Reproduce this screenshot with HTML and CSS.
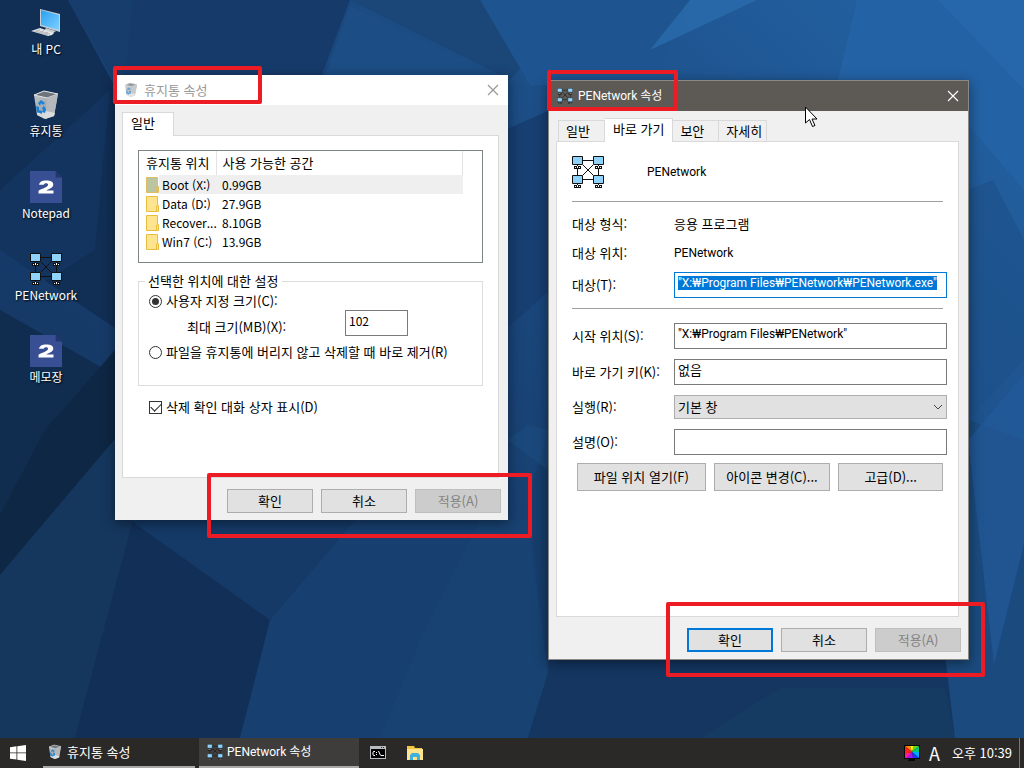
FILE: index.html
```html
<!DOCTYPE html>
<html lang="ko">
<head>
<meta charset="utf-8">
<title>바탕 화면</title>
<link rel="stylesheet" href="styles.css">
</head>
<body>
<svg class="defs" width="0" height="0" aria-hidden="true">
  <defs>
    <linearGradient id="sky" x1="0" y1="0.75" x2="1" y2="0"><stop offset="0" stop-color="#14335c"/><stop offset="0.5" stop-color="#1a467b"/><stop offset="1" stop-color="#2465a8"/></linearGradient>
    <linearGradient id="screen" x1="0" y1="0" x2="1" y2="1"><stop offset="0" stop-color="#2aa0f0"/><stop offset="1" stop-color="#7dd0ff"/></linearGradient>
    <linearGradient id="bin" x1="0" y1="0" x2="1" y2="1"><stop offset="0" stop-color="#c3c7ca"/><stop offset="0.6" stop-color="#9da2a7"/><stop offset="1" stop-color="#d8dadc"/></linearGradient>
    <symbol id="i-net" viewBox="0 0 32 32">
      <g fill="none" stroke="#111" stroke-width="1"><path d="M11 4.500h10M11 23.500h10M5.500 12v7M26.500 12v7M11 9l10 10M21 9L11 19"/></g>
      <g fill="#8fd3fb" stroke="#111"><path d="M.5.500h10v8H.5zM21.500.500h10v8h-10zM.5 19.500h10v8H.5zM21.500 19.500h10v8h-10z"/></g>
      <g fill="#111"><path d="M5 9h1v4H5zM2 10h7v3H2zM26 9h1v4h-1zM23 10h7v3h-7zM5 28h1v4H5zM2 29h7v3H2zM26 28h1v4h-1zM23 29h7v3h-7z"/></g>
      <g fill="#fff"><path d="M3 11h1v1H3zM5 10h1v2H5zM7 11h1v1H7zM24 11h1v1h-1zM26 10h1v2h-1zM28 11h1v1h-1zM3 30h1v1H3zM5 29h1v2H5zM7 30h1v1H7zM24 30h1v1h-1zM26 29h1v2h-1zM28 30h1v1h-1z"/></g>
    </symbol>
    <symbol id="i-bin" viewBox="0 0 32 32">
      <path d="M4 6l10-4 14 3-4 22-9 3-8-4z" fill="url(#bin)"/>
      <path d="M4 6l10-4 14 3-11 4z" fill="#6d747b" stroke="#e2e4e5" stroke-width="1"/>
      <path d="M17 9l11-4-4 22-9 3z" fill="#b4b8bd"/>
      <path d="M7 24l9-2 9 2-1 3-9 3-8-4z" fill="#e4e5e6" opacity=".8"/>
      <path d="M8 14l3-3 4 3-2 2-2-2-1 3zM6 17l3 1v3l3 1v3l-5-2zM14 17l2 3-1 4-3-1 1-2-1-2z" fill="#1683d8"/>
    </symbol>
    <symbol id="i-pc" viewBox="0 0 32 32">
      <path d="M10 2l20 5v18l-20-6z" fill="#c8d0d6"/><path d="M11 3l18 5v15l-18-5z" fill="url(#screen)"/>
      <path d="M16 21l10 3-4 3-8-3z" fill="#c9cccf"/><path d="M10 21l14 5-2 2-4 1-17-5z" fill="#e3e5e6"/>
      <path d="M6 23l14 4M4 24l14 4M10 22l-4 4M14 23l-4 4M18 25l-4 3" stroke="#a3a8ad" stroke-width=".7"/>
    </symbol>
    <symbol id="i-two" viewBox="0 0 30 30">
      <path d="M0 0h24l6 6v24H0z" fill="#384f93"/><path d="M24 0l6 6h-6z" fill="#24366e"/>
      <path d="M8.500 13c.3-2.700 2.800-4 6.700-4 4.200 0 6.600 1.300 6.600 3.700 0 2.500-2.200 3.500-6.500 5.500H22V21H8v-2.500c3.800-2 9-3.500 9-5.500 0-1-.8-1.500-1.900-1.500-1.300 0-2 .6-2.200 1.500z" fill="#fff"/>
    </symbol>
    <symbol id="i-folder" viewBox="0 0 13 16"><path d="M.5.500h11v9h1v6H.5z" fill="currentColor" stroke="#e8be3e"/><path d="M10.500 15v-5h1" fill="none" stroke="#e8be3e"/></symbol>
    <symbol id="i-close" viewBox="0 0 12 12"><path d="M1 1l10 10M11 1L1 11" fill="none" stroke="currentColor" stroke-width="1.200"/></symbol>
  </defs>
</svg>

<main class="desktop">
  <svg class="wallpaper" viewBox="0 0 1024 738" preserveAspectRatio="none" aria-hidden="true">
    <path fill="url(#sky)" d="M0 0h1024v738H0z"/>
    <path fill="#112e55" d="M0 0h68l57 105v230L0 250z"/>
    <path fill="#163d6c" d="M68 0h65l-8 100z"/>
    <path fill="#14396a" d="M110 90L95 250 0 310V190z" opacity=".5"/>
    <path fill="#163b6b" d="M133 0h217l-30 80H125z"/>
    <path fill="#1c4d84" d="M350 6l180 84H320z"/>
    <path fill="#1a4678" d="M350 0h230l-70 80z"/>
    <path fill="#1e5490" d="M480 0h210l-40 85H530z"/>
    <path fill="#2a6bad" d="M690 0h67L650 50z" opacity=".8"/>
    <path fill="#2362a5" d="M857 0h167v190l-60-70-126-40z"/>
    <path fill="#286bb0" d="M938 0h86v90z" opacity=".5"/>
    <path fill="#173f71" d="M505 130l45-20v180l-45 40z"/>
    <path fill="#102c4e" d="M0 310l115 65v64L0 575z"/>
    <path fill="#0e2744" d="M45 430l70-80v89L0 575v-60z"/>
    <path fill="#15375e" d="M115 439v81h18L75 738H0V575z"/>
    <path fill="#122f57" d="M133 520l-58 218h165l30-118z"/>
    <path fill="#153a67" d="M130 520h225l-85 100z"/>
    <path fill="#173f6f" d="M355 520h173l20 153-20 65H240l30-118z"/>
    <path fill="#194674" d="M420 640l60-120h48l20 153-20 65H380z" opacity=".5"/>
    <path fill="#163d6b" d="M528 500l20-70v240z"/>
    <path fill="#1c4c80" d="M508 440l40 30v-40l-20-5z" opacity=".6"/>
    <path fill="#143661" d="M548 655h397l10 83H528l20-65z"/>
    <path fill="#183f66" d="M700 738l80-50h165l10 50z" opacity=".5"/>
    <path fill="#1b4b7e" d="M945 650l23-230 56 20v298h-69z"/>
    <path fill="#235a9b" d="M968 440l56-66v170l-30 120z" opacity=".65"/>
    <path fill="#1c5088" d="M968 190l25-10 31 60v120l-56 60z" opacity=".6"/>
  </svg>

  <nav class="shortcuts" aria-label="바탕 화면 아이콘">
    <a class="shortcut" href="#pc"><svg class="ico32"><use href="#i-pc"/></svg><span>내 PC</span></a>
    <a class="shortcut" href="#bin"><svg class="ico32"><use href="#i-bin"/></svg><span>휴지통</span></a>
    <a class="shortcut" href="#notepad"><svg class="ico32"><use href="#i-two"/></svg><span>Notepad</span></a>
    <a class="shortcut" href="#penetwork"><svg class="ico32"><use href="#i-net"/></svg><span>PENetwork</span></a>
    <a class="shortcut" href="#memo"><svg class="ico32"><use href="#i-two"/></svg><span>메모장</span></a>
  </nav>

  <section class="window window-bin" aria-label="휴지통 속성">
    <header class="titlebar"><svg class="ico16"><use href="#i-bin"/></svg><h1>휴지통 속성</h1><button class="close" aria-label="닫기"><svg><use href="#i-close"/></svg></button></header>
    <div class="window-body">
      <div class="tabs" role="tablist"><button class="tab active" role="tab" aria-selected="true">일반</button></div>
      <div class="panel panel-bin">
        <div class="listbox">
          <table class="drives">
            <thead><tr><th class="col-name">휴지통 위치</th><th>사용 가능한 공간</th></tr></thead>
            <tbody>
              <tr class="selected"><td><span class="drive"><svg class="folder folder-dim"><use href="#i-folder"/></svg>Boot (X:)</span></td><td>0.99GB</td></tr>
              <tr><td><span class="drive"><svg class="folder"><use href="#i-folder"/></svg>Data (D:)</span></td><td>27.9GB</td></tr>
              <tr><td><span class="drive"><svg class="folder"><use href="#i-folder"/></svg>Recover...</span></td><td>8.10GB</td></tr>
              <tr><td><span class="drive"><svg class="folder"><use href="#i-folder"/></svg>Win7 (C:)</span></td><td>13.9GB</td></tr>
            </tbody>
          </table>
        </div>
        <fieldset class="group">
          <legend>선택한 위치에 대한 설정</legend>
          <label class="choice"><input type="radio" name="mode" checked>사용자 지정 크기(C):</label>
          <div class="size-row"><label for="max">최대 크기(MB)(X):</label><input class="text" id="max" type="text" value="102"></div>
          <label class="choice"><input type="radio" name="mode">파일을 휴지통에 버리지 않고 삭제할 때 바로 제거(R)</label>
        </fieldset>
        <label class="choice confirm"><input type="checkbox" checked>삭제 확인 대화 상자 표시(D)</label>
      </div>
      <footer class="actions"><button class="btn">확인</button><button class="btn">취소</button><button class="btn" disabled>적용(A)</button></footer>
    </div>
  </section>

  <section class="window window-net" aria-label="PENetwork 속성">
    <header class="titlebar"><svg class="ico16"><use href="#i-net"/></svg><h1 class="latin">PENetwork 속성</h1><button class="close" aria-label="닫기"><svg><use href="#i-close"/></svg></button></header>
    <div class="window-body">
      <div class="tabs" role="tablist"><button class="tab" role="tab">일반</button><button class="tab active" role="tab" aria-selected="true">바로 가기</button><button class="tab" role="tab">보안</button><button class="tab" role="tab">자세히</button></div>
      <div class="panel panel-net">
        <div class="identity"><svg class="ico32"><use href="#i-net"/></svg><span class="latin">PENetwork</span></div>
        <hr>
        <div class="props info">
          <span>대상 형식:</span><span>응용 프로그램</span>
          <span>대상 위치:</span><span class="latin">PENetwork</span>
          <label for="target">대상(T):</label><input class="text latin" id="target" type="text" value="&quot;X:₩Program Files₩PENetwork₩PENetwork.exe&quot;">
        </div>
        <hr>
        <div class="props">
          <label for="start">시작 위치(S):</label><input class="text latin" id="start" type="text" value="&quot;X:₩Program Files₩PENetwork&quot;">
          <label for="key">바로 가기 키(K):</label><input class="text" id="key" type="text" value="없음">
          <label for="run">실행(R):</label><span class="select-wrap"><select id="run"><option>기본 창</option></select><svg viewBox="0 0 10 6"><path d="M1 1l4 4 4-4" fill="none" stroke="#444"/></svg></span>
          <label for="note">설명(O):</label><input class="text" id="note" type="text">
        </div>
        <div class="tools"><button class="btn">파일 위치 열기(F)</button><button class="btn">아이콘 변경(C)...</button><button class="btn">고급(D)...</button></div>
      </div>
      <footer class="actions"><button class="btn primary">확인</button><button class="btn">취소</button><button class="btn" disabled>적용(A)</button></footer>
    </div>
  </section>

  <div class="mark mark-a"></div><div class="mark mark-b"></div><div class="mark mark-c"></div><div class="mark mark-d"></div>
  <svg class="cursor" viewBox="0 0 13 22" aria-hidden="true"><path d="M.5 1v16l4-3.500 3 7 2.500-1-3-6.500H12z" fill="#fff" stroke="#000"/></svg>
</main>

<footer class="taskbar">
  <button class="start" aria-label="시작"><svg viewBox="0 0 16 16"><path d="M0 2.300L6.500 1.300v6.200H0zM7.300 1.200L16 0v7.500H7.300zM0 8.300h6.500v6.300L0 13.700zM7.300 8.300H16V16l-8.700-1.200z" fill="#fff"/></svg></button>
  <button class="task"><svg class="ico16"><use href="#i-bin"/></svg>휴지통 속성</button>
  <button class="task current"><svg class="ico16"><use href="#i-net"/></svg><span class="latin">PENetwork 속성</span></button>
  <button class="pin" aria-label="명령 프롬프트"><svg viewBox="0 0 16 14"><path d="M0 0h16v13H0z" fill="#b8bcc2"/><path d="M1 3h14v9H1z" fill="#000"/><path d="M11 1h1v1h-1zM13 1h1v1h-1z" fill="#333"/><path d="M5 5.500H3.500l-.5.500v3l.5.500H5M6.500 6v1M6.500 8v1M8.500 5l2 4.500M11 9.500h3" fill="none" stroke="#fff"/></svg></button>
  <button class="pin" aria-label="파일 탐색기"><svg viewBox="0 0 16 14"><path d="M0 0h7l1 2h7v3H0z" fill="#f3c63f"/><path d="M0 3h16v11H0z" fill="#ffe48d"/><path d="M3 14V9l2-2h6l2 2v5h-3v-3H6v3z" fill="#40b1dc"/></svg></button>
  <div class="tray">
    <svg class="display" viewBox="0 0 16 16"><path d="M0 0h16v14H0zM5 14h6v2H4z" fill="#080808"/><path d="M8 7L1 1h5z" fill="#ff8a00"/><path d="M8 7L6 1h4z" fill="#fff000"/><path d="M8 7l2-6h5z" fill="#5de020"/><path d="M8 7l7-6v6z" fill="#00c878"/><path d="M8 7h7v6z" fill="#00a8ff"/><path d="M8 7l7 6H9z" fill="#1838ff"/><path d="M8 7l1 6H3z" fill="#9a18ff"/><path d="M8 7l-5 6H1V8z" fill="#ff18a0"/><path d="M8 7L1 9V1z" fill="#ff2020"/></svg>
    <span class="ime">A</span>
    <time datetime="22:39">오후 10:39</time>
  </div>
</footer>
<script src="script.js"></script>
</body>
</html>
```
FILE: styles.css
```css
* { box-sizing: border-box; }
body {
  margin: 0;
  min-height: 100vh;
  display: flex;
  flex-direction: column;
  font: 13px/18px "Noto Sans CJK KR", sans-serif;
  color: #000;
  background: #17406f;
}
button, input, select { font: inherit; color: inherit; border-radius: 0; margin: 0; }
h1 { margin: 0; font: inherit; }
svg { display: block; flex: none; }
.defs { position: absolute; }
.ico32 { width: 32px; height: 32px; }
.ico16 { width: 16px; height: 16px; }
.latin { font-family: Roboto, "Noto Sans CJK KR", sans-serif; font-size: 12px; }

.desktop { position: relative; flex: 1; overflow: hidden; }
.wallpaper { position: absolute; inset: 0; width: 100%; height: 100%; }

.shortcuts { position: relative; width: 92px; padding-top: 7px; display: grid; gap: 31px; font-size: 12px; }
.shortcut {
  display: grid;
  row-gap: 1px;
  justify-items: center;
  color: #fff;
  text-decoration: none;
  text-shadow: 1px 1px 2px #000;
}

.window {
  position: absolute;
  display: flex;
  flex-direction: column;
  background: #f0f0f0;
  box-shadow: 0 3px 12px rgba(0, 0, 0, .45);
}
.window-bin { left: 115px; top: 75px; width: 393px; min-height: 445px; }
.window-net { left: 548px; top: 80px; width: 421px; min-height: 580px; border: 1px solid #8b8986; }
.titlebar { display: flex; align-items: center; gap: 5px; height: 30px; padding-left: 8px; }
.titlebar h1 { flex: 1; }
.window-bin .titlebar { background: #fff; color: #999; }
.window-bin .titlebar .ico16 { opacity: .75; }
.window-net .titlebar { background: #5d5955; color: #fff; }
.close { width: 30px; height: 30px; padding: 0; border: 0; background: none; display: grid; place-items: center; }
.close svg { width: 12px; height: 12px; }
.window-body { flex: 1; display: flex; flex-direction: column; padding: 7px 9px 7px 7px; }

.tabs { display: flex; align-items: flex-end; }
.tab {
  height: 21px;
  padding: 0 14px 0 7px;
  border: 1px solid #d9d9d9;
  border-bottom: 0;
  background: #f0f0f0;
  text-align: left;
}
.tab + .tab { border-left: 0; }
.tab.active { position: relative; height: 24px; margin-bottom: -1px; padding: 0 8px 3px; background: #fff; }
.window-bin .tab.active { width: 52px; }
.window-net .tabs { padding-left: 2px; }
.window-net .tab:last-child { padding: 0 4px 0 7px; }
.panel { flex: 1; display: flex; flex-direction: column; background: #fff; border: 1px solid #d9d9d9; }
.actions { display: flex; justify-content: flex-end; gap: 8px; margin-right: -2px; padding-top: 11px; }
.actions .btn { width: 86px; height: 24px; }
.btn { padding: 0; border: 1px solid #adadad; background: #e1e1e1; }
.btn.primary { border: 2px solid #0078d7; }
.btn:disabled { background: #ccc; border-color: #bfbfbf; color: #838383; }

.text { min-width: 0; height: 26px; padding: 0 3px 5px; border: 1px solid #7a7a7a; background: #fff; outline: 0; }
.text:focus { border-color: #0078d7; }
.text::selection { background: #0078d7; color: #fff; }

.panel-bin { padding: 14px 15px; }
.listbox { height: 113px; padding-right: 19px; border: 1px solid #7f8582; font-size: 12px; }
.drives { width: 100%; border-collapse: collapse; table-layout: fixed; }
.drives th { height: 24px; padding: 0 0 0 6px; text-align: left; font-size: 13px; font-weight: 400; border-right: 1px solid #e3e3e3; white-space: nowrap; }
.drives .col-name { width: 77px; padding-left: 7px; }
.drives td { height: 19px; padding: 0 0 0 6px; line-height: 19px; white-space: nowrap; }
.drives td:first-child { padding-left: 7px; }
.drives .selected { background: linear-gradient(90deg, #fff 20px, #efefef 20px); }
.drive { display: flex; align-items: center; gap: 3px; }
.folder { width: 13px; height: 16px; color: #ffe48f; }
.folder-dim { color: #b9c795; filter: saturate(.7); }

.group { margin: 8px 0 0; padding: 1px 10px 0; border: 1px solid #dcdcdc; min-width: 0; height: 115px; }
.group legend { margin-left: -4px; padding: 0 3px; line-height: 20px; }
.choice { display: flex; align-items: center; gap: 4px; white-space: nowrap; }
.choice input {
  appearance: none;
  flex: none;
  width: 13px;
  height: 13px;
  border: 1px solid #333;
  background: #fff;
  display: grid;
  place-items: center;
}
.choice input[type="radio"] { border-radius: 50%; }
.choice input[type="radio"]:checked::before { content: ""; width: 7px; height: 7px; border-radius: 50%; background: #333; }
.choice input[type="checkbox"]:checked::before { content: ""; width: 9px; height: 5px; border: solid #222; border-width: 0 0 1px 1px; transform: rotate(-45deg); margin-bottom: 3px; }
.size-row { display: flex; align-items: center; justify-content: space-between; padding: 0 64px 0 38px; height: 33px; }
.size-row .text { width: 63px; align-self: flex-start; font-size: 12px; }
.confirm { margin: 12px 0 0 11px; }

.panel-net { padding: 13px 11px 0 15px; }
.identity { display: flex; align-items: center; gap: 43px; height: 33px; }
hr { width: calc(100% - 4px); height: 1px; margin: 13px 0 0; border: 0; background: #a0a0a0; }
.props { display: grid; grid-template-columns: 102px 1fr; align-items: center; row-gap: 10px; padding-top: 14px; }
.props.info { padding-top: 12px; row-gap: 9px; grid-auto-rows: minmax(20px, auto); }
.props.info + hr { margin-top: 10px; }
.select-wrap { position: relative; display: grid; }
.select-wrap svg { position: absolute; right: 4px; top: 9px; width: 10px; height: 6px; pointer-events: none; }
.select-wrap select { appearance: none; height: 24px; padding: 0 3px; border: 1px solid #adadad; background: #e1e1e1; }
.tools { display: grid; grid-template-columns: 129fr 117fr 105fr; gap: 8px; padding: 8px 4px 0 5px; }
.tools .btn { height: 28px; }

.mark { position: absolute; border: 4px solid #ed1c24; border-radius: 2px; }
.mark-a { left: 113px; top: 66px; width: 149px; height: 38px; }
.mark-b { left: 207px; top: 473px; width: 325px; height: 65px; }
.mark-c { left: 547px; top: 70px; width: 131px; height: 41px; }
.mark-d { left: 666px; top: 602px; width: 319px; height: 75px; }
.cursor { position: absolute; left: 805px; top: 106px; width: 13px; height: 22px; }

.taskbar { display: flex; height: 30px; background: #2a2928; color: #fff; }
.taskbar button { border: 0; background: none; }
.start { width: 43px; padding: 0 0 0 10px; }
.start svg { width: 16px; height: 16px; }
.task { display: flex; align-items: center; gap: 4px; width: 152px; padding: 0 4px; }
.taskbar .task { border-bottom: 2px solid #aaa8a6; }
.taskbar .current { width: 160px; margin-left: 4px; padding: 0 8px; background: #3e3d3c; }
.pin { width: 37px; padding: 0; display: grid; place-items: center; }
.pin svg { width: 16px; height: 14px; }
.tray { display: flex; align-items: center; gap: 9px; margin: 0 4px 0 auto; padding-right: 7px; border-right: 1px solid #777; }
.display { width: 16px; height: 16px; }
.ime { font-size: 18px; }
.tray time { margin-left: 3px; }
```
FILE: script.js
```js
const target = document.getElementById("target");
target.focus();
target.select();
```
